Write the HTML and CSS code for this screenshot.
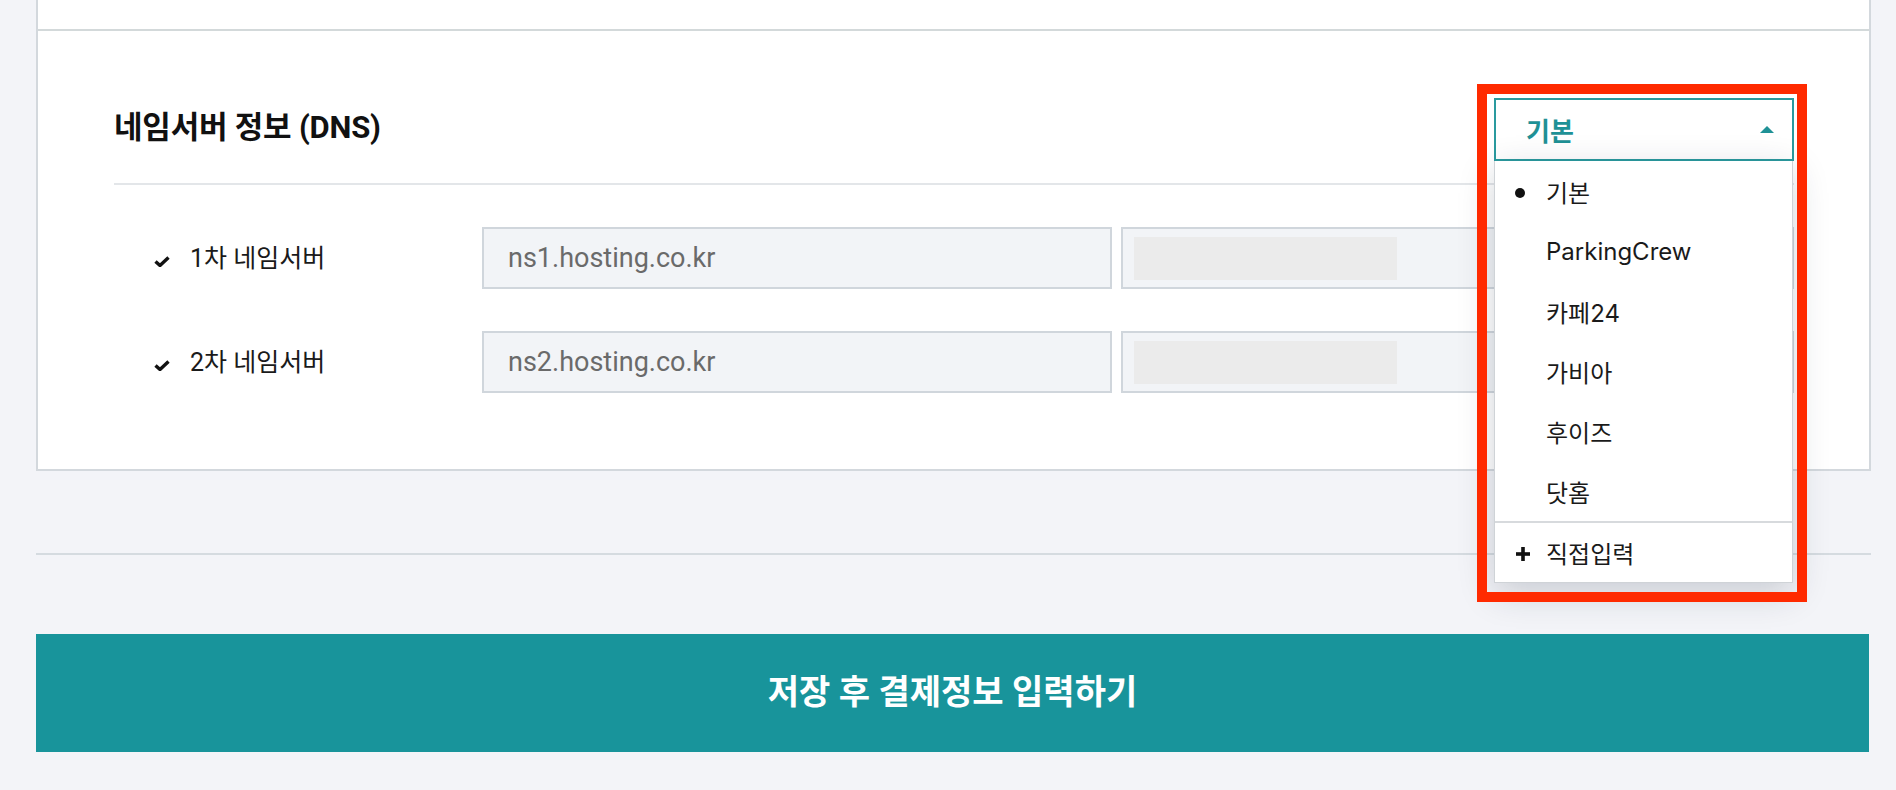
FILE: index.html
```html
<!DOCTYPE html>
<html lang="ko">
<head>
<meta charset="utf-8">
<title>네임서버 정보</title>
<link rel="stylesheet" href="styles.css">
</head>
<body>
<div class="page">
  <div class="card">
    <div class="card-prev"></div>
    <section class="dns">
      <div class="dns-head">
        <h2 class="dns-title">네임서버 정보 (DNS)</h2>
        <div class="dd">
          <div class="dd-select"><span class="dd-value">기본</span><i class="dd-arrow"></i></div>
          <ul class="dd-list">
            <li class="dd-item is-selected"><i class="dd-bullet"></i>기본</li>
            <li class="dd-item">ParkingCrew</li>
            <li class="dd-item">카페24</li>
            <li class="dd-item">가비아</li>
            <li class="dd-item">후이즈</li>
            <li class="dd-item">닷홈</li>
            <li class="dd-item dd-custom"><svg class="dd-plus" viewBox="0 0 14 14" width="14" height="14"><rect x="5.2" y="0" width="3.6" height="14" fill="#111"/><rect x="0" y="5.2" width="14" height="3.6" fill="#111"/></svg>직접입력</li>
          </ul>
          <div class="dd-mark"></div>
        </div>
      </div>
      <div class="dns-divider"></div>
      <div class="ns-rows">
        <div class="ns-row">
          <div class="ns-label"><svg class="ns-check" viewBox="0 0 16 11" width="16" height="11"><path d="M1.5 5.5 L6 9.5 L14.5 1.5" fill="none" stroke="#111" stroke-width="3.4" stroke-linejoin="miter" stroke-linecap="butt"/></svg><span>1차 네임서버</span></div>
          <div class="ns-input">ns1.hosting.co.kr</div>
          <div class="ns-input ns-input-ip"><span class="ns-ph"></span></div>
        </div>
        <div class="ns-row">
          <div class="ns-label"><svg class="ns-check" viewBox="0 0 16 11" width="16" height="11"><path d="M1.5 5.5 L6 9.5 L14.5 1.5" fill="none" stroke="#111" stroke-width="3.4" stroke-linejoin="miter" stroke-linecap="butt"/></svg><span>2차 네임서버</span></div>
          <div class="ns-input">ns2.hosting.co.kr</div>
          <div class="ns-input ns-input-ip"><span class="ns-ph"></span></div>
        </div>
      </div>
    </section>
  </div>
  <div class="page-sep"></div>
  <button class="submit" type="button">저장 후 결제정보 입력하기</button>
</div>
</body>
</html>
```

FILE: styles.css
```css
* { box-sizing: border-box; }
html, body { margin: 0; padding: 0; }
body {
  background: #f3f4f8;
  font-family: Roboto, "Noto Sans CJK KR", sans-serif;
  color: #222;
  width: 1896px;
  height: 790px;
  overflow: hidden;
}
.page {
  margin-left: 36px;
  width: 1835px;
}
.card {
  background: #fff;
  border: 2px solid #d3d8dd;
  border-top: none;
}
.card-prev {
  height: 31px;
  border-bottom: 2px solid #d3d9da;
}
.dns {
  padding: 67px 75px 76px 76px;
}
.dns-head {
  display: flex;
  align-items: center;
  justify-content: space-between;
  height: 63px;
}
.dns-title {
  margin: 0;
  padding-bottom: 10px;
  font-size: 31px;
  font-weight: 700;
  color: #111;
  letter-spacing: -0.2px;
}
.dd {
  position: relative;
  width: 300px;
  height: 63px;
}
.dd-select {
  height: 63px;
  border: 2px solid #2a9a9e;
  background: #fff;
  display: flex;
  align-items: center;
  justify-content: space-between;
  padding: 0 18px 0 30px;
}
.dd-value {
  font-size: 26px;
  font-weight: 700;
  color: #1f9196;
}
.dd-arrow {
  width: 0;
  height: 0;
  border-left: 7px solid transparent;
  border-right: 7px solid transparent;
  border-bottom: 7px solid #1f9196;
}
.dd-list {
  position: absolute;
  left: 0;
  top: 63px;
  width: 299px;
  margin: 0;
  padding: 0;
  list-style: none;
  background: #fff;
  border: 1px solid #cfd3d7;
  border-top: none;
  box-shadow: 0 10px 34px rgba(30, 40, 60, 0.2);
  z-index: 5;
}
.dd-item {
  position: relative;
  height: 60px;
  display: flex;
  align-items: center;
  padding-left: 51px;
  font-family: Inter, "Noto Sans CJK KR", sans-serif;
  font-size: 24px;
  color: #1a1a1a;
}
.dd-bullet {
  position: absolute;
  left: 20px;
  top: 27px;
  width: 10px;
  height: 10px;
  border-radius: 50%;
  background: #111;
}
.dd-custom {
  border-top: 2px solid #d7dadd;
  height: 61px;
}
.dd-plus {
  position: absolute;
  left: 21px;
  top: 24px;
}
.dd-mark {
  position: absolute;
  left: -17px;
  top: -14px;
  width: 330px;
  height: 518px;
  border: 10px solid #ff2a00;
  z-index: 6;
  pointer-events: none;
}
.dns-divider {
  margin-top: 22px;
  height: 2px;
  background: #e3e6e9;
}
.ns-rows {
  margin-top: 42px;
  display: flex;
  flex-direction: column;
  gap: 42px;
}
.ns-row {
  display: flex;
  align-items: center;
  height: 62px;
  padding-left: 40px;
}
.ns-label {
  width: 328px;
  display: flex;
  align-items: center;
  gap: 20px;
  font-size: 25px;
  color: #1a1a1a;
  padding-bottom: 4px;
}
.ns-check { flex: none; margin-top: 10px; }
.ns-input {
  width: 630px;
  height: 62px;
  border: 2px solid #d0d6dc;
  background: #f2f4f7;
  display: flex;
  align-items: center;
  padding-left: 24px;
  font-size: 27px;
  color: #6a6a6a;
}
.ns-input-ip {
  flex: 1;
  width: auto;
  margin-left: 9px;
  padding-left: 11px;
}
.ns-ph {
  width: 263px;
  height: 43px;
  background: #ebebeb;
}
.page-sep {
  margin-top: 82px;
  height: 2px;
  background: #d5dbe0;
}
.submit {
  display: block;
  margin-top: 79px;
  width: 1833px;
  height: 118px;
  border: none;
  padding: 0 0 8px 0;
  background: #18949b;
  color: #fff;
  font-family: Roboto, "Noto Sans CJK KR", sans-serif;
  font-size: 34px;
  font-weight: 700;
  cursor: pointer;
}
```
